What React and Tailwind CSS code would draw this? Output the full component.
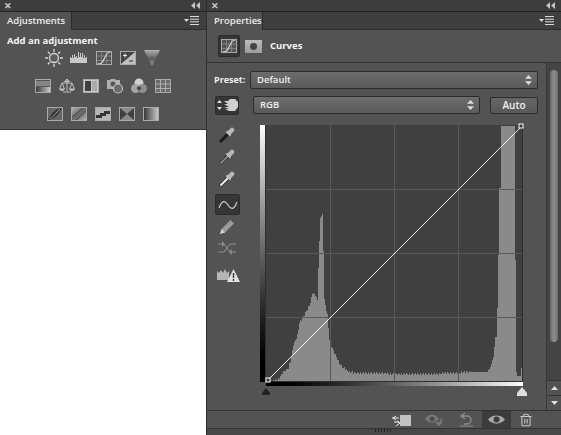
import { Trash2 } from "lucide-react";

const HIST = [
  [270, 381], [278, 379], [283, 372], [288, 368], [291, 357], [293, 345], [297, 335], [299, 323], [304, 315], [310, 303],
  [312, 293], [315, 295], [317, 300], [318, 267], [320, 217], [322, 215], [323, 250], [324, 300], [327, 315], [329, 340],
  [331, 346], [335, 355], [340, 365], [347, 371], [355, 373], [375, 373], [400, 374], [430, 374], [470, 372], [487, 372],
  [490, 367], [493, 357], [495, 337], [496, 337], [497, 308], [498, 255], [499, 188], [500, 188], [501, 126],
];

// step the outline per pixel so it reads as histogram bars
function histPath() {
  let d = "M270 381";
  for (let i = 0; i < HIST.length - 1; i++) {
    const [x0, y0] = HIST[i];
    const [x1, y1] = HIST[i + 1];
    for (let x = x0; x < x1; x++) {
      const t = (x - x0) / (x1 - x0);
      const wobble = x < 470 ? Math.round(Math.sin(x * 2.3) * 1.2) : 0;
      const y = Math.min(381, Math.round(y0 + (y1 - y0) * t) + wobble);
      d += ` L${x} ${y} L${x + 1} ${y}`;
    }
  }
  return d + " L501 126 L515 126 L515 260 L516 260 L516 367 L517 376 L521 376 L521 368 L522 368 L522 381 Z";
}

const G = "#a9a9a9";

function Defs() {
  return (
    <svg width="0" height="0" className="absolute">
      <defs>
        <linearGradient id="dl" x1="0" x2="1" y1="0" y2="0">
          <stop offset="0" stopColor="#3a3a3a" />
          <stop offset="1" stopColor="#c8c8c8" />
        </linearGradient>
        <linearGradient id="ld" x1="0" x2="1" y1="0" y2="1">
          <stop offset="0" stopColor="#b5b5b5" />
          <stop offset="0.5" stopColor="#666" />
          <stop offset="1" stopColor="#b5b5b5" />
        </linearGradient>
        <linearGradient id="tri" x1="0" x2="0" y1="0" y2="1">
          <stop offset="0" stopColor="#b0b0b0" />
          <stop offset="0.55" stopColor="#5c5c5c" />
          <stop offset="1" stopColor="#a5a5a5" />
        </linearGradient>
      </defs>
    </svg>
  );
}

const Ic = ({ children, w = 16, h = 16, vb = "0 0 16 16", className = "" }) => (
  <svg width={w} height={h} viewBox={vb} className={"shrink-0 overflow-visible " + className}>
    {children}
  </svg>
);

const Box = ({ children }) => (
  <Ic>
    {children}
    <rect x="0.5" y="1.500" width="15" height="13" fill="none" stroke={G} />
  </Ic>
);

const CurvesIcon = () => (
  <Box>
    <rect x="0.5" y="1.500" width="15" height="13" fill="#555" />
    <path d="M5.500 2v12M10.500 2v12M1 6h14M1 10.500h14" stroke="#8a8a8a" strokeWidth="0.8" />
    <path d="M1.500 14c5 0 5-2 7-6s3-6 6-6" fill="none" stroke="#e2e2e2" strokeWidth="1.100" />
  </Box>
);

const adjustRow1 = [
  <Ic key="sun">
    <circle cx="8" cy="8" r="4.500" fill="#5c5c5c" stroke="#d8d8d8" strokeWidth="1.300" />
    <path d="M8 -1v3M8 14v3M-1 8h3M14 8h3M1.800 1.800l2 2M12.200 12.200l2 2M1.800 14.200l2-2M12.200 3.800l2-2" stroke="#d8d8d8" strokeWidth="1.300" />
  </Ic>,
  <Ic key="levels" w={18} vb="0 0 18 16">
    <path d="M0 13V7h1v1h1V5h1v3h1V4h1v3h1V6h1v2h1V2h1v5h1V3h1v4h1V3h1v5h1V5h1v3h1V7h1v6z" fill="#c8c8c8" />
  </Ic>,
  <CurvesIcon key="curves" />,
  <Ic key="exposure">
    <rect x="0.5" y="1.500" width="15" height="13" fill="#444" stroke={G} />
    <path d="M1 14L15 2v12z" fill="#c0c0c0" />
    <path d="M3 5.500h4M5 3.500v4" stroke="#eee" />
    <path d="M9 11h4" stroke="#333" />
  </Ic>,
  <Ic key="vibrance">
    <path d="M0 0h16L8 16z" fill="url(#tri)" />
  </Ic>,
];

const adjustRow2 = [
  <Ic key="hue">
    <rect x="0.5" y="1.500" width="15" height="13" fill="#555" stroke={G} />
    <path d="M2 3v5M4 3v5M6 3v5M8 3v5M10 3v5M12 3v5M14 3v5" stroke="#b5b5b5" />
    <rect x="1" y="9" width="14" height="5" fill="url(#dl)" />
  </Ic>,
  <Ic key="balance">
    <path d="M8 2v11M4 14h8M3 5h10M8 1L5.500 3.500h5z" stroke="#c0c0c0" fill="none" />
    <path d="M3 5L.5 11h5zM13 5l-2.500 6h5z" stroke="#c0c0c0" fill="none" />
    <path d="M.5 11a2.500 2 0 005 0zM10.500 11a2.500 2 0 005 0z" fill="#c0c0c0" />
  </Ic>,
  <Ic key="bw">
    <rect x="0.5" y="1.500" width="15" height="13" fill="#c8c8c8" stroke={G} />
    <rect x="2" y="3" width="6" height="10" fill="#3e3e3e" />
    <rect x="9" y="3" width="5" height="10" fill="#aaa" />
  </Ic>,
  <Ic key="photo">
    <path d="M0 2h3l1-1h4l1 1h4v9H0z" fill="#b0b0b0" />
    <circle cx="6" cy="6" r="2.500" fill="#555" />
    <circle cx="11" cy="10.500" r="4.500" fill="#6a6a6a" stroke="#c2c2c2" strokeWidth="1.200" />
  </Ic>,
  <Ic key="mixer">
    <circle cx="8" cy="5" r="4.500" fill="#d2d2d2" />
    <circle cx="4.500" cy="10.500" r="4.500" fill="#a5a5a5" />
    <circle cx="11.500" cy="10.500" r="4.500" fill="#8f8f8f" />
    <path d="M8 8l-2.500 2 2.500 3 2.500-3z" fill="#454545" />
  </Ic>,
  <Ic key="lookup">
    <rect x="0.5" y="1.500" width="15" height="13" fill="#6b6b6b" stroke={G} />
    <path d="M5.500 2v12M10.500 2v12M1 6h14M1 10.500h14" stroke="#b0b0b0" />
  </Ic>,
];

const adjustRow3 = [
  <Box key="invert">
    <rect x="1" y="2" width="14" height="12" fill="#666" />
    <path d="M1 14C4 9 7 3 15 2 12 7 9 13 1 14z" fill="#333" />
    <path d="M3 13C6 11 9 7 13 3" stroke="#a5a5a5" fill="none" />
  </Box>,
  <Box key="poster">
    <path d="M1 14L15 2v12zM1 2h14L1 14z" fill="url(#ld)" />
    <path d="M1 11L12 2M5 14L15 5" stroke="#555" strokeWidth="1.400" />
  </Box>,
  <Box key="threshold">
    <rect x="1" y="2" width="14" height="12" fill="#b5b5b5" />
    <path d="M1 12V9h4V7h4V5h6v3h-4v2H7v2z" fill="#333" />
  </Box>,
  <Box key="gradmap">
    <rect x="1" y="2" width="14" height="12" fill="#8a8a8a" />
    <path d="M1 2l7 6-7 6zM15 2L8 8l7 6z" fill="#3f3f3f" />
  </Box>,
  <Box key="selective">
    <rect x="1" y="2" width="14" height="12" fill="url(#dl)" />
  </Box>,
];

function Titlebar() {
  return (
    <div className="h-[12px] shrink-0 flex items-center justify-between pl-[4px] pr-[6px] bg-[#3d3d3d] border-b border-[#222]">
      <span className="text-[#cfcfcf] text-[9px] leading-none font-bold">✕</span>
      <svg width="9" height="7" viewBox="0 0 9 7">
        <path d="M4 0v7L0 3.500zM9 0v7L5 3.500z" fill="#c4c4c4" />
      </svg>
    </div>
  );
}

function TabRow({ label, w }) {
  return (
    <div className="h-[18px] shrink-0 flex justify-between bg-[#3f3f3f] border-b border-[#2e2e2e]">
      <div className={"h-[18px] bg-[#535353] border-r border-[#2b2b2b] text-[#eeeeee] text-[9.5px] font-semibold leading-[18px] pl-[7px] " + w}>
        {label}
      </div>
      <div className="flex items-center gap-[1px] pr-[6px]">
        <svg width="16" height="9" viewBox="0 0 16 9">
          <path d="M0 3h5L2.500 6z" fill="#ddd" />
          <path d="M6 .5h9M6 3.200h9M6 5.800h9M6 8.500h9" stroke="#ddd" />
        </svg>
      </div>
    </div>
  );
}

function Select({ label, className }) {
  return (
    <div className={"h-[18px] flex items-center justify-between rounded-[2px] border border-[#2c2c2c] bg-linear-to-b from-[#6d6d6d] to-[#5a5a5a] pl-[6px] pr-[5px] text-[#ededed] text-[9.5px] font-semibold " + className}>
      <span>{label}</span>
      <svg width="7" height="10" viewBox="0 0 7 10">
        <path d="M3.500 0L7 3.800H0zM3.500 10L0 6.200h7z" fill="#dcdcdc" />
      </svg>
    </div>
  );
}

const Dropper = ({ tip }) => (
  <svg width="16" height="17" viewBox="0 0 16 17">
    <path d="M2 15L9 8" stroke="#2c2c2c" strokeWidth="3.400" strokeLinecap="round" />
    <path d="M2 15L9 8" stroke={tip} strokeWidth="2" strokeLinecap="round" />
    <path d="M7.500 5.500l4 4" stroke="#d0d0d0" strokeWidth="2" />
    <path d="M10.500 6.500L13 4" stroke="#b8b8b8" strokeWidth="4.500" strokeLinecap="round" />
  </svg>
);

function Tools() {
  return (
    <div className="w-[45px] shrink-0 flex flex-col items-start pl-[8px]">
      <div className="w-[24px] flex flex-col items-center gap-[5px] pt-[1px]">
        <Dropper tip="#1c1c1c" />
        <Dropper tip="#8a8a8a" />
        <Dropper tip="#f0f0f0" />
      </div>
      <div className="mt-[7px] w-[25px] h-[21px] rounded-[2px] bg-[#363636] border border-[#2c2c2c] flex items-center justify-center">
        <svg width="20" height="12" viewBox="0 0 20 12">
          <path d="M1 9C4 1 7 1 10 6s6 5 9-3" fill="none" stroke="#cfcfcf" strokeWidth="1.200" />
        </svg>
      </div>
      <div className="w-[24px] flex flex-col items-center mt-[4px] gap-[6px]">
        <svg width="16" height="16" viewBox="0 0 16 16">
          <path d="M11.500 1L15 4.500 6 13.500 1 15l1.500-5z" fill="#9a9a9a" />
          <path d="M2.500 10L6 13.500 1 15z" fill="#d0d0d0" />
        </svg>
        <svg width="20" height="14" viewBox="0 0 20 14">
          <path d="M1 3h5c3 0 5 8 8 8h5M1 11h5c3 0 5-8 8-8h5" fill="none" stroke="#8c8c8c" strokeWidth="1.200" />
          <path d="M5 0l3 3-3 3zM15 8l-3 3 3 3z" fill="#8c8c8c" />
        </svg>
      </div>
      <svg width="23" height="14" viewBox="0 0 23 14" className="mt-[13px] ml-[2px]">
        <path d="M0 12V3l2 2 2-3 2 3 2-4 2 4 2-2v9z" fill="#b5b5b5" />
        <path d="M16.500 1L23 14H10z" fill="#e2e2e2" />
        <path d="M16.500 5v5M16.500 11v2" stroke="#333" strokeWidth="1.400" />
      </svg>
    </div>
  );
}

function Graph() {
  return (
    <div className="w-[263px] shrink-0">
      <div className="flex h-[257px]">
        <div className="w-[5px] bg-linear-to-b from-white to-black" />
        <div className="w-[1px] bg-[#2f2f2f]" />
        <svg width="257" height="257" viewBox="266 125 257 257" className="overflow-visible bg-[#404040]">
          <path d={histPath()} fill="#8a8a8a" shapeRendering="crispEdges" />
          <path d="M330.500 125v256M394.500 125v256M458.500 125v256M266 189.500h256M266 253.500h256M266 317.500h256" stroke="#595959" strokeWidth="1" />
          <path d="M522.500 125v256.500H266" fill="none" stroke="#2f2f2f" />
          <path d="M267.500 380.500L521 127" stroke="#fff" strokeWidth="0.900" />
          <rect x="266" y="378" width="4" height="4" fill="#333" stroke="#fff" />
          <rect x="519" y="124" width="4" height="4" fill="#333" stroke="#fff" />
        </svg>
      </div>
      <div className="ml-[6px] h-[4px] w-[257px] bg-linear-to-r from-black to-white" />
      <div className="flex justify-between w-[266px] ml-[1px] mt-[1px]">
        <svg width="10" height="9" viewBox="0 0 10 9">
          <path d="M5 .5l4.500 5.500v2.500H.5V6z" fill="#222" stroke="#6a6a6a" strokeWidth="0.6" />
        </svg>
        <svg width="10" height="9" viewBox="0 0 10 9">
          <path d="M5 0l5 6v3H0V6z" fill="#dedede" />
        </svg>
      </div>
    </div>
  );
}

function Scrollbar() {
  return (
    <div className="w-[15px] shrink-0 flex flex-col bg-[#444] border-l border-[#383838]">
      <div className="flex-1 pt-[7px] pl-[3px]">
        <div className="w-[8px] h-[272px] rounded-full bg-linear-to-r from-[#6a6a6a] via-[#8e8e8e] to-[#6f6f6f]" />
      </div>
      <div className="h-[15px] bg-[#525252] border-t border-[#333] flex items-center justify-center">
        <svg width="7" height="4" viewBox="0 0 7 4"><path d="M3.500 0L7 4H0z" fill="#e0e0e0" /></svg>
      </div>
      <div className="h-[15px] bg-[#525252] border-t border-[#333] flex items-center justify-center">
        <svg width="7" height="4" viewBox="0 0 7 4"><path d="M3.500 4L0 0h7z" fill="#e0e0e0" /></svg>
      </div>
    </div>
  );
}

function Footer() {
  return (
    <div className="h-[19px] shrink-0 flex items-stretch justify-end bg-[#535353] border-y border-[#333]">
      <div className="flex items-center gap-[14px] pr-[7px]">
        <svg width="19" height="14" viewBox="0 0 19 14">
          <rect x="8" y="2" width="11" height="11" fill="#c2c2c2" />
          <path d="M0 5h7M2 9h5M4 3l-3 2 3 2M4 13l4-3-3-2" stroke="#eee" fill="none" />
        </svg>
        <svg width="20" height="14" viewBox="0 0 20 14">
          <path d="M0 6c4-6 10-6 14 0-4 5-10 5-14 0z" fill="#777" />
          <circle cx="7" cy="6" r="2.500" fill="#4d4d4d" />
          <path d="M16 5c2 3 1 6-2 7M11 10l3 3 1-4z" stroke="#777" fill="#777" />
        </svg>
        <svg width="16" height="15" viewBox="0 0 16 15">
          <path d="M6 1L2 4l4 3M3 4h5a4 4 0 010 8H5" fill="none" stroke="#8c8c8c" strokeWidth="1.400" />
          <path d="M1 14h13" stroke="#8c8c8c" />
        </svg>
      </div>
      <div className="w-[29px] bg-[#3c3c3c] flex items-center justify-center">
        <svg width="17" height="11" viewBox="0 0 17 11">
          <path d="M0 5.500C4 0 13 0 17 5.500 13 11 4 11 0 5.500z" fill="#a8a8a8" />
          <circle cx="8.500" cy="5.500" r="3" fill="#3c3c3c" />
        </svg>
      </div>
      <div className="w-[50px] pl-[8px] flex items-center">
        <Trash2 size={14} color="#c8c8c8" strokeWidth={1.800} />
      </div>
    </div>
  );
}

export default function App() {
  return (
    <div className="w-[561px] h-[435px] flex items-start bg-white overflow-hidden font-['Open_Sans','Liberation_Sans',sans-serif]">
      <Defs />
      <div className="w-[206px] h-[130px] shrink-0 flex flex-col bg-[#535353] border-b border-[#333]">
        <Titlebar />
        <TabRow label="Adjustments" w="w-[72px]" />
        <div className="text-[#f4f4f4] text-[9.5px] font-bold leading-[11px] pl-[7px] pt-[5px]">Add an adjustment</div>
        <div className="flex flex-col items-center pr-[1px] pt-[4px] gap-[12px]">
          <div className="flex gap-[8px] items-center">{adjustRow1}</div>
          <div className="flex gap-[8px] items-center">{adjustRow2}</div>
          <div className="flex gap-[8px] items-center">{adjustRow3}</div>
        </div>
      </div>
      <div className="w-[355px] h-[435px] shrink-0 flex flex-col bg-[#535353] border-l border-[#2e2e2e]">
        <Titlebar />
        <TabRow label="Properties" w="w-[56px]" />
        <div className="h-[33px] shrink-0 flex items-center pl-[11px] border-b border-[#333]">
          <div className="w-[22px] h-[22px] rounded-[2px] bg-[#363636] border border-[#2c2c2c] flex items-center justify-center">
            <CurvesIcon />
          </div>
          <div className="ml-[5px] w-[17px] h-[13px] bg-linear-to-b from-[#bdbdbd] to-[#9c9c9c] flex items-center justify-center">
            <div className="w-[7px] h-[7px] rounded-full bg-[#444]" />
          </div>
          <span className="ml-[8px] text-[#f4f4f4] text-[9.5px] font-bold">Curves</span>
        </div>
        <div className="flex-1 flex min-h-0">
          <div className="flex-1 pt-[8px]">
            <div className="flex items-center h-[18px] pl-[7px]">
              <span className="w-[36px] text-[#eeeeee] text-[9px] font-bold">Preset:</span>
              <Select label="Default" className="w-[288px]" />
            </div>
            <div className="flex items-center h-[18px] mt-[7px] pl-[8px]">
              <div className="w-[24px] h-[19px] rounded-[2px] bg-[#363636] border border-[#2c2c2c] flex items-center justify-center">
                <svg width="21" height="14" viewBox="0 0 21 14">
                  <path d="M2.500 2L5 5H0zM2.500 12L0 9h5z" fill="#ddd" />
                  <path d="M7 3h4l2-2h5l3 3v5l-3 4h-6l-4-2h4l-5-2h5L7 6h4z" fill="#cfcfcf" />
                </svg>
              </div>
              <Select label="RGB" className="ml-[14px] w-[227px]" />
              <div className="ml-[10px] w-[48px] h-[17px] rounded-[2px] border border-[#2c2c2c] bg-linear-to-b from-[#666] to-[#585858] text-[#f0f0f0] text-[10px] font-semibold flex items-center justify-center">
                Auto
              </div>
            </div>
            <div className="flex mt-[11px]">
              <Tools />
              <div className="w-[8px]" />
              <Graph />
            </div>
          </div>
          <Scrollbar />
        </div>
        <Footer />
        <div className="h-[6px] shrink-0 bg-[#484848] flex justify-center">
          <div className="w-[18px] h-[3px] bg-[repeating-linear-gradient(90deg,#222_0,#222_1px,transparent_1px,transparent_3px)]" />
        </div>
      </div>
    </div>
  );
}
